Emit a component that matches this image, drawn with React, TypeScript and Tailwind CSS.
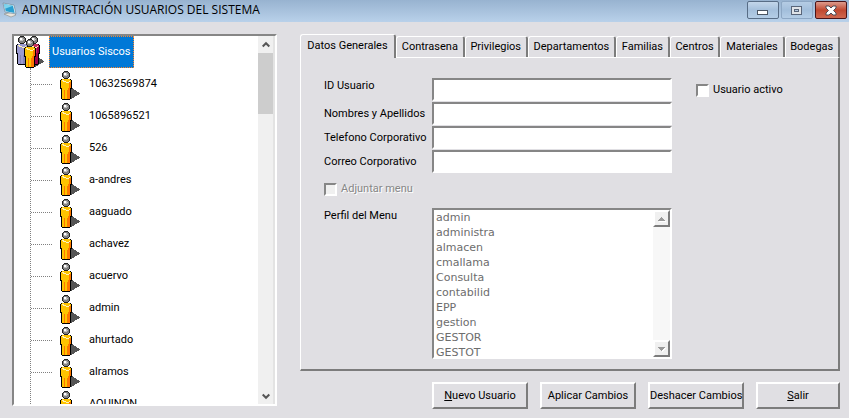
import React from "react";

const users = [
  "10632569874",
  "1065896521",
  "526",
  "a-andres",
  "aaguado",
  "achavez",
  "acuervo",
  "admin",
  "ahurtado",
  "alramos",
  "AQUINON",
];

const tabs = [
  "Contrasena",
  "Privilegios",
  "Departamentos",
  "Familias",
  "Centros",
  "Materiales",
  "Bodegas",
];

const fields = [
  { id: "id-usuario", label: "ID Usuario", align: "items-start" },
  { id: "nombres", label: "Nombres y Apellidos", align: "items-center" },
  { id: "telefono", label: "Telefono Corporativo", align: "items-center" },
  { id: "correo", label: "Correo Corporativo", align: "items-center" },
];

const profiles = [
  "admin",
  "administra",
  "almacen",
  "cmallama",
  "Consulta",
  "contabilid",
  "EPP",
  "gestion",
  "GESTOR",
  "GESTOT",
];

const sunken =
  "border-2 border-t-[#868686] border-l-[#868686] border-r-white border-b-white";
const raised =
  "border-2 border-t-white border-l-white border-r-[#7c7c7c] border-b-[#7c7c7c]";

function Person({ x, y, light, dark }: { x: number; y: number; light: string; dark: string }) {
  return (
    <g transform={`translate(${x} ${y})`}>
      <path d="M1 8h10v1h1v9h-1v10h-1v1H2v-1H1v-10H0V9h1z" fill="#000" />
      <path d="M2 8h8v1h1v8h-1v11H2V17H1V9h1z" fill={light} />
      <path d="M9 11h2v6h-1v11H7v-9h1v-2h1z" fill={dark} />
      <path d="M4 19h1v9H4z" fill={dark} />
      <path d="M2 9h2v1h2v1h3v-1h1v1H9v1H6v-1H3v-1H2z" fill="#fff3b8" />
      <path d="M4 0h4v1h1v1h1v4H9v1H8v1H4V7H3V6H2V2h1V1h1z" fill="#222" />
      <path d="M4 1h4v1h1v4H8v1H4V6H3V2h1z" fill="#808080" />
      <path d="M4 2h3v1h1v1H7v1H4z" fill="#c0c0c0" />
      <path d="M4 2h2v2H4z" fill="#fff" />
    </g>
  );
}

function UserIcon() {
  return (
    <svg className="size-8 shrink-0" viewBox="0 0 32 32" shapeRendering="crispEdges" aria-hidden="true">
      <path d="M18 20h3v1h1v1h2v1h1v1h2v1h1v1h-1v1h-2v1h-2v1h-1v1h-2v1h-3z" fill="#555" />
      <Person x={8} y={3} light="#ffc400" dark="#ff7800" />
    </svg>
  );
}

function GroupIcon() {
  return (
    <svg className="size-8 shrink-0" viewBox="0 0 32 32" shapeRendering="crispEdges" aria-hidden="true">
      <path d="M20 21h5v1h1v1h2v1h1v1h1v1h-1v1h-2v1h-2v1h-1v1h-2v1h-3z" fill="#555" />
      <Person x={2} y={0} light="#9a9ad0" dark="#8484b8" />
      <Person x={14} y={0} light="#c8305c" dark="#a00048" />
      <Person x={10} y={3} light="#ffc400" dark="#ff7800" />
    </svg>
  );
}

function TitleBar() {
  const control = "flex h-[18px] w-8 items-center justify-center rounded-[2px] border";
  return (
    <header className="flex h-[22px] items-start bg-linear-to-b from-[#98b3d0] to-[#b9d1ea] pr-0.5 pl-0.5">
      <svg className="mt-0.5 size-4" viewBox="0 0 16 16" aria-hidden="true">
        <path d="M2 12l7 3 5-2-3-3z" fill="#e8e4dc" stroke="#8b8b86" strokeWidth=".6" />
        <path d="M1 1l11 2 2 9-11-2z" fill="#f4f8fa" stroke="#6b879a" strokeWidth=".7" />
        <path d="M2 2l9 1.700 1.700 7.200-9-1.700z" fill="#2a9fd0" />
        <path d="M2 2l9 1.700-8 3z" fill="#7fd4ee" />
      </svg>
      <h1 className="ml-1 font-['Open_Sans','Noto_Sans',sans-serif] text-[12px] leading-5 whitespace-nowrap text-black">
        ADMINISTRACIÓN USUARIOS DEL SISTEMA
      </h1>
      <div className="mt-px ml-auto flex gap-0.5">
        <button type="button" aria-label="Minimizar" className={`${control} border-[#586d86] bg-linear-to-b from-[#c3d6ea] via-[#a5c0dc] to-[#b4cde6]`}>
          <svg className="h-4 w-3" viewBox="0 0 12 16" shapeRendering="crispEdges">
            <rect x="0.500" y="8.500" width="10" height="4" fill="#fff" stroke="#4b5563" />
          </svg>
        </button>
        <button type="button" aria-label="Maximizar" className={`${control} border-[#8da7c4] bg-linear-to-b from-[#b5cce4] via-[#a2bedb] to-[#b4cde6]`}>
          <svg className="h-4 w-3" viewBox="0 0 12 16" shapeRendering="crispEdges">
            <rect x="0.500" y="4.500" width="10" height="8" fill="#dfe3e8" stroke="#596579" />
            <rect x="3.500" y="7.500" width="4" height="2" fill="#b5c8de" stroke="#596579" />
          </svg>
        </button>
        <button type="button" aria-label="Cerrar" className={`${control} border-[#4a1418] bg-linear-to-b from-[#dc9a8c] via-[#c04830] to-[#cf6850]`}>
          <svg className="h-4 w-3" viewBox="0 0 12 16">
            <path d="M1 4h3l2 2 2-2h3v2L8.500 8.500 11 11v2H8l-2-2-2 2H1v-2l2.500-2.500L1 6z" fill="#fff" stroke="#4d4a55" />
          </svg>
        </button>
      </div>
    </header>
  );
}

function UserTree() {
  return (
    <section className={`flex h-[372px] w-[265px] shrink-0 bg-white ${sunken}`} aria-label="Usuarios">
      <div role="tree" className="min-w-0 flex-1 overflow-hidden">
        <div role="treeitem" aria-selected="true" className="flex h-8">
          <GroupIcon />
          <span className="ml-[3px] flex items-center border border-dotted border-[#ff8728] bg-[#0078d7] px-0.5 whitespace-nowrap text-white">
            Usuarios Siscos
          </span>
        </div>
        <ul role="group" className="ml-4 border-l border-dotted border-[#808080]">
          {users.map((name) => (
            <li key={name} role="treeitem" className="flex h-8 items-center">
              <span className="w-[21px] border-t border-dotted border-[#808080]" />
              <UserIcon />
              <span className="ml-[5px]">{name}</span>
            </li>
          ))}
        </ul>
      </div>
      <div className="flex w-[17px] flex-col border-r-2 border-[#e3e3e3] bg-[#f0f0f0]">
        <button type="button" aria-label="Subir" className="flex h-[17px] items-center justify-center">
          <svg className="size-2" viewBox="0 0 8 8" fill="none" stroke="#555" strokeWidth="2">
            <path d="M0.700 5.500L4 2.200l3.300 3.300" />
          </svg>
        </button>
        <div className="h-[61px] bg-[#cdcdcd]" />
        <button type="button" aria-label="Bajar" className="mt-auto flex h-[17px] items-center justify-center">
          <svg className="size-2" viewBox="0 0 8 8" fill="none" stroke="#555" strokeWidth="2">
            <path d="M0.700 2.500L4 5.800l3.300-3.300" />
          </svg>
        </button>
      </div>
    </section>
  );
}

function ScrollArrow({ label, d }: { label: string; d: string }) {
  return (
    <button type="button" disabled aria-label={label} className={`flex h-[17px] items-center justify-center bg-[#f0f0f0] ${raised}`}>
      <svg className="h-2 w-[9px]" viewBox="0 0 9 8" shapeRendering="crispEdges">
        <path d={d} fill="#fff" transform="translate(1 1)" />
        <path d={d} fill="#9a9a9a" />
      </svg>
    </button>
  );
}

function ProfileList() {
  return (
    <div className={`flex h-[151px] bg-white ${sunken}`}>
      <select
        id="perfil"
        size={10}
        disabled
        className="h-full min-w-0 flex-1 appearance-none overflow-hidden bg-white p-0 pt-px font-['DejaVu_Sans',sans-serif] text-[11px] text-[#6d6d6d] opacity-100 outline-none"
      >
        {profiles.map((p) => (
          <option key={p} className="h-[15px] min-h-0 p-0 pl-0.5 leading-[15px] text-[#6d6d6d]">
            {p}
          </option>
        ))}
      </select>
      <div className="flex w-[17px] flex-col justify-between bg-[#f7f7f7]">
        <ScrollArrow label="Subir" d="M4 2h1v1h1v1h1v1h1v1H1V5h1V4h1V3h1z" />
        <ScrollArrow label="Bajar" d="M1 2h7v1H7v1H6v1H5v1H4V5H3V4H2V3H1z" />
      </div>
    </div>
  );
}

function Tabs() {
  const edge =
    "rounded-t-[3px] border-t border-l border-r-2 border-t-white border-l-white border-r-[#7c7c7c] whitespace-nowrap";
  return (
    <div role="tablist" className="flex items-end">
      <button type="button" role="tab" aria-selected="true" className={`relative z-10 -mb-px h-6 w-24 shrink-0 bg-[#e0dfe3] pb-0.5 ${edge}`}>
        Datos Generales
      </button>
      {tabs.map((t) => (
        <button key={t} type="button" role="tab" aria-selected="false" className={`h-[21px] grow ${edge}`}>
          {t}
        </button>
      ))}
    </div>
  );
}

function Panel() {
  const box = `size-[13px] shrink-0 appearance-none ${sunken}`;
  return (
    <div role="tabpanel" className="flex items-start border-t border-r-2 border-b-2 border-l border-t-white border-r-[#7c7c7c] border-b-[#7c7c7c] border-l-white pt-5 pb-2.5 pl-[23px]">
      <div className="w-[348px] shrink-0">
        <div className="flex flex-col gap-px">
          {fields.map((f) => (
            <div key={f.id} className={`flex ${f.align}`}>
              <label htmlFor={f.id} className="w-[108px] shrink-0 whitespace-nowrap">
                {f.label}
              </label>
              <input id={f.id} type="text" className={`h-[23px] min-w-0 flex-1 bg-white px-1 outline-none ${sunken}`} />
            </div>
          ))}
        </div>
        <label className="mt-2 flex items-center gap-1 text-[#868686] [text-shadow:1px_1px_0_#fff]">
          <input type="checkbox" disabled className={`${box} bg-[#f0f0f0]`} />
          Adjuntar menu
        </label>
        <div className="mt-[11px] flex items-start">
          <label htmlFor="perfil" className="w-[108px] shrink-0">
            Perfil del Menu
          </label>
          <div className="min-w-0 flex-1">
            <ProfileList />
          </div>
        </div>
      </div>
      <label className="mt-1 ml-6 flex items-center gap-1 whitespace-nowrap">
        <input type="checkbox" className={`${box} bg-white`} />
        Usuario activo
      </label>
    </div>
  );
}

export default function App() {
  const action = `h-[27px] whitespace-nowrap ${raised}`;
  return (
    <div className="min-h-screen bg-[#e0dfe3] font-[Roboto,sans-serif] text-[11px] leading-4 text-black">
      <TitleBar />
      <main className="flex items-start gap-[23px] pt-3 pr-[9px] pb-2 pl-3">
        <UserTree />
        <div className="min-w-0 flex-1">
          <Tabs />
          <Panel />
          <div className="mt-[11px] flex justify-end gap-3">
            <button type="button" className={`w-24 ${action}`}>
              <u>N</u>uevo Usuario
            </button>
            <button type="button" className={`w-24 ${action}`}>Aplicar Cambios</button>
            <button type="button" className={`w-24 ${action}`}>Deshacer Cambios</button>
            <button type="button" className={`w-[84px] ${action}`}>
              <u>S</u>alir
            </button>
          </div>
        </div>
      </main>
    </div>
  );
}
